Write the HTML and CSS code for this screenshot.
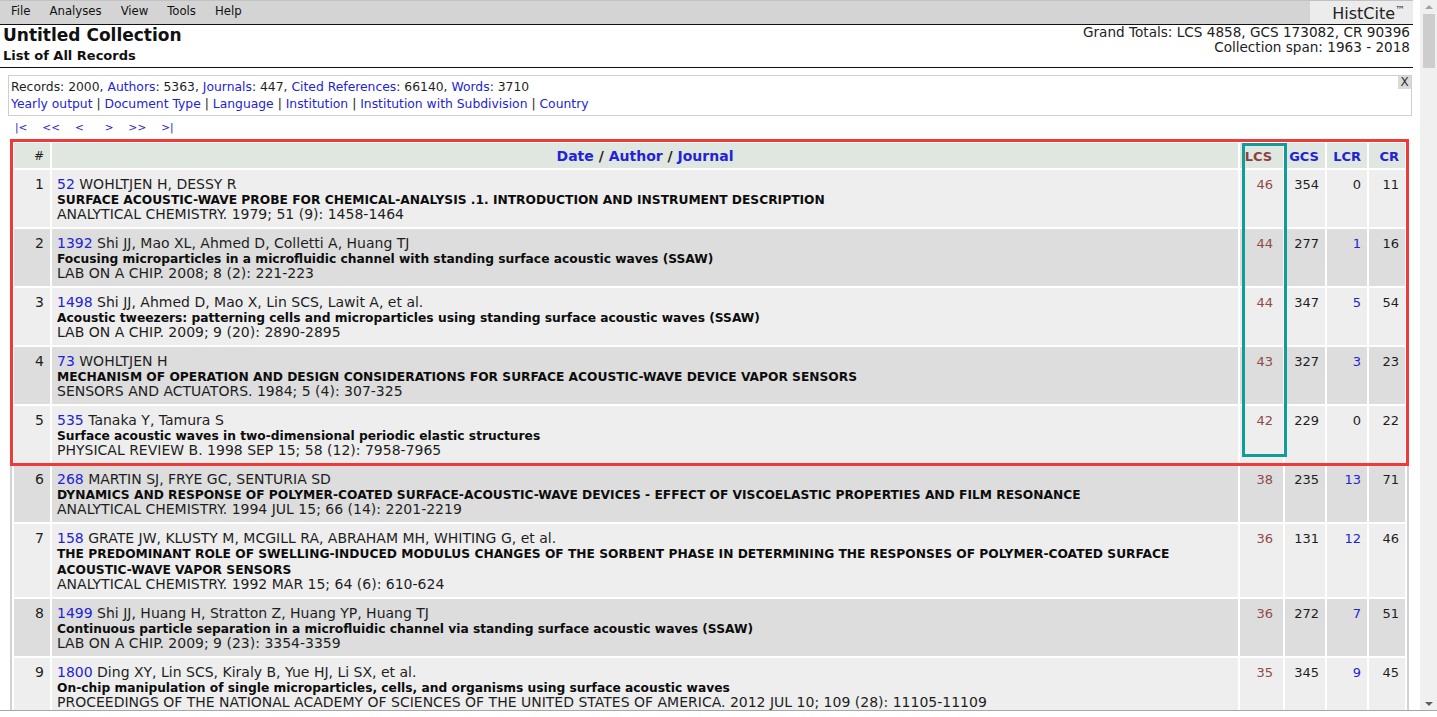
FILE: index.html
```html
<!DOCTYPE html>
<html>
<head>
<meta charset="utf-8">
<title>HistCite - List of All Records</title>
<link rel="stylesheet" href="styles.css">
</head>
<body>
<div class="window">
  <div class="page">
    <div class="menubar">
      <nav class="menus">
        <span>File</span><span>Analyses</span><span>View</span><span>Tools</span><span>Help</span>
      </nav>
      <div class="brand">HistCite<sup>™</sup></div>
    </div>

    <header class="head">
      <div class="titles">
        <h1>Untitled Collection</h1>
        <h2>List of All Records</h2>
      </div>
      <div class="totals">
        <div>Grand Totals: LCS 4858, GCS 173082, CR 90396</div>
        <div>Collection span: 1963 - 2018</div>
      </div>
    </header>

    <section class="infobox">
      <div>Records: 2000, <a>Authors</a>: 5363, <a>Journals</a>: 447, <a>Cited References</a>: 66140, <a>Words</a>: 3710</div>
      <div><a>Yearly output</a> | <a>Document Type</a> | <a>Language</a> | <a>Institution</a> | <a>Institution with Subdivision</a> | <a>Country</a></div>
      <span class="close">X</span>
    </section>

    <div class="pager">
      <a>|&lt;</a><a>&lt;&lt;</a><a class="wide">&lt;</a><a>&gt;</a><a>&gt;&gt;</a><a>&gt;|</a>
    </div>

    <table class="records">
      <colgroup>
        <col class="c-num"><col class="c-main"><col class="c-lcs"><col class="c-gcs"><col class="c-lcr"><col class="c-cr">
      </colgroup>
      <thead>
        <tr>
          <th class="num">#</th>
          <th class="main"><a>Date</a> / <a>Author</a> / <a>Journal</a></th>
          <th class="lcs">LCS</th>
          <th><a>GCS</a></th>
          <th><a>LCR</a></th>
          <th><a>CR</a></th>
        </tr>
      </thead>
      <tbody>
        <tr>
          <td class="num">1</td>
          <td class="main"><div class="au"><a>52</a> WOHLTJEN H, DESSY R</div><div class="ti">SURFACE ACOUSTIC-WAVE PROBE FOR CHEMICAL-ANALYSIS .1. INTRODUCTION AND INSTRUMENT DESCRIPTION</div><div class="so">ANALYTICAL CHEMISTRY. 1979; 51 (9): 1458-1464</div></td>
          <td class="lcs">46</td><td class="n">354</td><td class="n">0</td><td class="n">11</td>
        </tr>
        <tr>
          <td class="num">2</td>
          <td class="main"><div class="au"><a>1392</a> Shi JJ, Mao XL, Ahmed D, Colletti A, Huang TJ</div><div class="ti">Focusing microparticles in a microfluidic channel with standing surface acoustic waves (SSAW)</div><div class="so">LAB ON A CHIP. 2008; 8 (2): 221-223</div></td>
          <td class="lcs">44</td><td class="n">277</td><td class="n"><a>1</a></td><td class="n">16</td>
        </tr>
        <tr>
          <td class="num">3</td>
          <td class="main"><div class="au"><a>1498</a> Shi JJ, Ahmed D, Mao X, Lin SCS, Lawit A, et al.</div><div class="ti">Acoustic tweezers: patterning cells and microparticles using standing surface acoustic waves (SSAW)</div><div class="so">LAB ON A CHIP. 2009; 9 (20): 2890-2895</div></td>
          <td class="lcs">44</td><td class="n">347</td><td class="n"><a>5</a></td><td class="n">54</td>
        </tr>
        <tr>
          <td class="num">4</td>
          <td class="main"><div class="au"><a>73</a> WOHLTJEN H</div><div class="ti">MECHANISM OF OPERATION AND DESIGN CONSIDERATIONS FOR SURFACE ACOUSTIC-WAVE DEVICE VAPOR SENSORS</div><div class="so">SENSORS AND ACTUATORS. 1984; 5 (4): 307-325</div></td>
          <td class="lcs">43</td><td class="n">327</td><td class="n"><a>3</a></td><td class="n">23</td>
        </tr>
        <tr>
          <td class="num">5</td>
          <td class="main"><div class="au"><a>535</a> Tanaka Y, Tamura S</div><div class="ti">Surface acoustic waves in two-dimensional periodic elastic structures</div><div class="so">PHYSICAL REVIEW B. 1998 SEP 15; 58 (12): 7958-7965</div></td>
          <td class="lcs">42</td><td class="n">229</td><td class="n">0</td><td class="n">22</td>
        </tr>
        <tr>
          <td class="num">6</td>
          <td class="main"><div class="au"><a>268</a> MARTIN SJ, FRYE GC, SENTURIA SD</div><div class="ti">DYNAMICS AND RESPONSE OF POLYMER-COATED SURFACE-ACOUSTIC-WAVE DEVICES - EFFECT OF VISCOELASTIC PROPERTIES AND FILM RESONANCE</div><div class="so">ANALYTICAL CHEMISTRY. 1994 JUL 15; 66 (14): 2201-2219</div></td>
          <td class="lcs">38</td><td class="n">235</td><td class="n"><a>13</a></td><td class="n">71</td>
        </tr>
        <tr>
          <td class="num">7</td>
          <td class="main"><div class="au"><a>158</a> GRATE JW, KLUSTY M, MCGILL RA, ABRAHAM MH, WHITING G, et al.</div><div class="ti">THE PREDOMINANT ROLE OF SWELLING-INDUCED MODULUS CHANGES OF THE SORBENT PHASE IN DETERMINING THE RESPONSES OF POLYMER-COATED SURFACE ACOUSTIC-WAVE VAPOR SENSORS</div><div class="so">ANALYTICAL CHEMISTRY. 1992 MAR 15; 64 (6): 610-624</div></td>
          <td class="lcs">36</td><td class="n">131</td><td class="n"><a>12</a></td><td class="n">46</td>
        </tr>
        <tr>
          <td class="num">8</td>
          <td class="main"><div class="au"><a>1499</a> Shi JJ, Huang H, Stratton Z, Huang YP, Huang TJ</div><div class="ti">Continuous particle separation in a microfluidic channel via standing surface acoustic waves (SSAW)</div><div class="so">LAB ON A CHIP. 2009; 9 (23): 3354-3359</div></td>
          <td class="lcs">36</td><td class="n">272</td><td class="n"><a>7</a></td><td class="n">51</td>
        </tr>
        <tr>
          <td class="num">9</td>
          <td class="main"><div class="au"><a>1800</a> Ding XY, Lin SCS, Kiraly B, Yue HJ, Li SX, et al.</div><div class="ti">On-chip manipulation of single microparticles, cells, and organisms using surface acoustic waves</div><div class="so">PROCEEDINGS OF THE NATIONAL ACADEMY OF SCIENCES OF THE UNITED STATES OF AMERICA. 2012 JUL 10; 109 (28): 11105-11109</div></td>
          <td class="lcs">35</td><td class="n">345</td><td class="n"><a>9</a></td><td class="n">45</td>
        </tr>
      </tbody>
    </table>

    <div class="mark mark-red"></div>
    <div class="mark mark-teal"></div>
  </div>

  <div class="scrollbar">
    <span class="arrow up"></span>
    <span class="thumb"></span>
    <span class="track"></span>
    <span class="arrow down"></span>
  </div>
</div>
</body>
</html>
```

FILE: styles.css
```css
* { box-sizing: border-box; }

html, body {
  margin: 0;
  padding: 0;
  background: #ffffff;
  overflow: hidden;
}

body {
  font-family: "DejaVu Sans", Verdana, sans-serif;
  font-size: 13px;
  color: #1e1e1e;
}

a {
  color: #2323d6;
  text-decoration: none;
  cursor: pointer;
}

.window {
  display: flex;
  height: 711px;
  border-bottom: 1px solid #a8a8a8;
  overflow: hidden;
}

.page {
  position: relative;
  width: 1420px;
  flex: none;
  overflow: hidden;
}

/* ---------- menu bar ---------- */
.menubar {
  width: 1413px;
  height: 25px;
  display: flex;
  justify-content: space-between;
  background: #d4d4d4;
  border-top: 1px solid #c2c2c2;
  border-bottom: 1px solid #111;
}

.menus {
  display: flex;
  gap: 19px;
  padding-left: 11px;
  font-family: "DejaVu Sans Condensed", "DejaVu Sans", sans-serif;
  font-size: 13px;
  line-height: 20px;
  color: #111;
}

.brand {
  width: 103px;
  background: #ececec;
  font-family: "DejaVu Sans", sans-serif;
  font-size: 16px;
  line-height: 25px;
  color: #222;
  text-align: right;
  padding-right: 8px;
}

.brand sup {
  font-size: 10px;
  vertical-align: 6px;
  line-height: 0;
}

/* ---------- header ---------- */
.head {
  width: 1413px;
  height: 43px;
  display: flex;
  justify-content: space-between;
  border-bottom: 1px solid #111;
}

.titles { padding-left: 3px; }

.titles h1 {
  margin: 0;
  padding-top: 1px;
  font-size: 17px;
  line-height: 19px;
  font-weight: bold;
  color: #111;
}

.titles h2 {
  margin: 3px 0 0 0;
  font-size: 13px;
  line-height: 16px;
  font-weight: bold;
  color: #111;
}

.totals {
  padding-right: 3px;
  text-align: right;
  font-size: 13.6px;
  line-height: 15px;
  color: #222;
}

/* ---------- info box ---------- */
.infobox {
  position: relative;
  margin: 7px 0 0 8px;
  width: 1404px;
  height: 41px;
  border: 1px solid #cfcfcf;
  padding: 3px 0 0 2px;
  line-height: 17px;
  font-size: 12.35px;
}

.close {
  position: absolute;
  top: 0;
  right: 0;
  width: 13px;
  height: 13px;
  background: #dadada;
  font-size: 12px;
  line-height: 13px;
  text-align: center;
  color: #333;
}

/* ---------- pager ---------- */
.pager {
  display: flex;
  padding-left: 15px;
  margin-top: 3px;
  line-height: 17px;
  font-size: 10.5px;
}

.pager a { margin-right: 15px; }
.pager a.wide { margin-right: 21px; }

/* ---------- table ---------- */
.records {
  margin: 3px 0 0 10px;
  width: 1399px;
  table-layout: fixed;
  border-collapse: separate;
  border-spacing: 2px;
  border: 2px solid #d2d2d2;
}

.c-num { width: 36px; }
.c-lcs { width: 43px; }
.c-gcs { width: 40px; }
.c-lcr { width: 40px; }
.c-cr  { width: 36px; }

.records th {
  background: #e0e7e0;
  height: 25px;
  padding: 1px 6px 0 0;
  font-weight: bold;
  line-height: 17px;
  text-align: right;
  vertical-align: middle;
}

.records th.num {
  font-weight: normal;
  font-size: 12px;
  color: #222;
}

.records th.main {
  text-align: center;
  padding: 1px 0 0 0;
  font-size: 14px;
}

.records th.lcs {
  color: #8f3f3f;
  text-align: center;
  padding: 1px 6px 0 0;
}

.records td {
  vertical-align: top;
  padding: 7px 6px 5px 0;
  line-height: 15px;
  text-align: right;
}

.records td.num { font-size: 14px; }

.records td.main {
  text-align: left;
  padding-left: 5px;
  padding-right: 4px;
  font-size: 14px;
}

.records td.main .ti {
  color: #0c0c0c;
  font-weight: bold;
  font-size: 12.25px;
  line-height: 16px;
}

.records td.main .so { margin-top: -1px; }

.records td.lcs {
  color: #8f4a4a;
  padding-right: 10px;
}

.records tbody tr:nth-child(odd) td { background: #eeeeee; }
.records tbody tr:nth-child(even) td { background: #dddddd; }

/* ---------- annotation overlays ---------- */
.mark {
  position: absolute;
  pointer-events: none;
}

.mark-red {
  left: 10px;
  top: 139px;
  width: 1399px;
  height: 327px;
  border: 3px solid #ef3a3a;
}

.mark-teal {
  left: 1242px;
  top: 143px;
  width: 45px;
  height: 314px;
  border: 3px solid #109c99;
}

/* ---------- fake scrollbar ---------- */
.scrollbar {
  width: 17px;
  flex: none;
  display: flex;
  flex-direction: column;
  align-items: center;
  background: #f0f0f0;
}

.arrow {
  width: 0;
  height: 0;
  flex: none;
  border-left: 4px solid transparent;
  border-right: 4px solid transparent;
}

.arrow.up {
  margin-top: 5px;
  border-bottom: 4px solid #a3a3a3;
}

.arrow.down {
  margin-bottom: 4px;
  border-top: 4px solid #606060;
}

.thumb {
  width: 12px;
  height: 54px;
  margin-top: 5px;
  background: #cdcdcd;
  flex: none;
}

.track { flex: 1; }
```
